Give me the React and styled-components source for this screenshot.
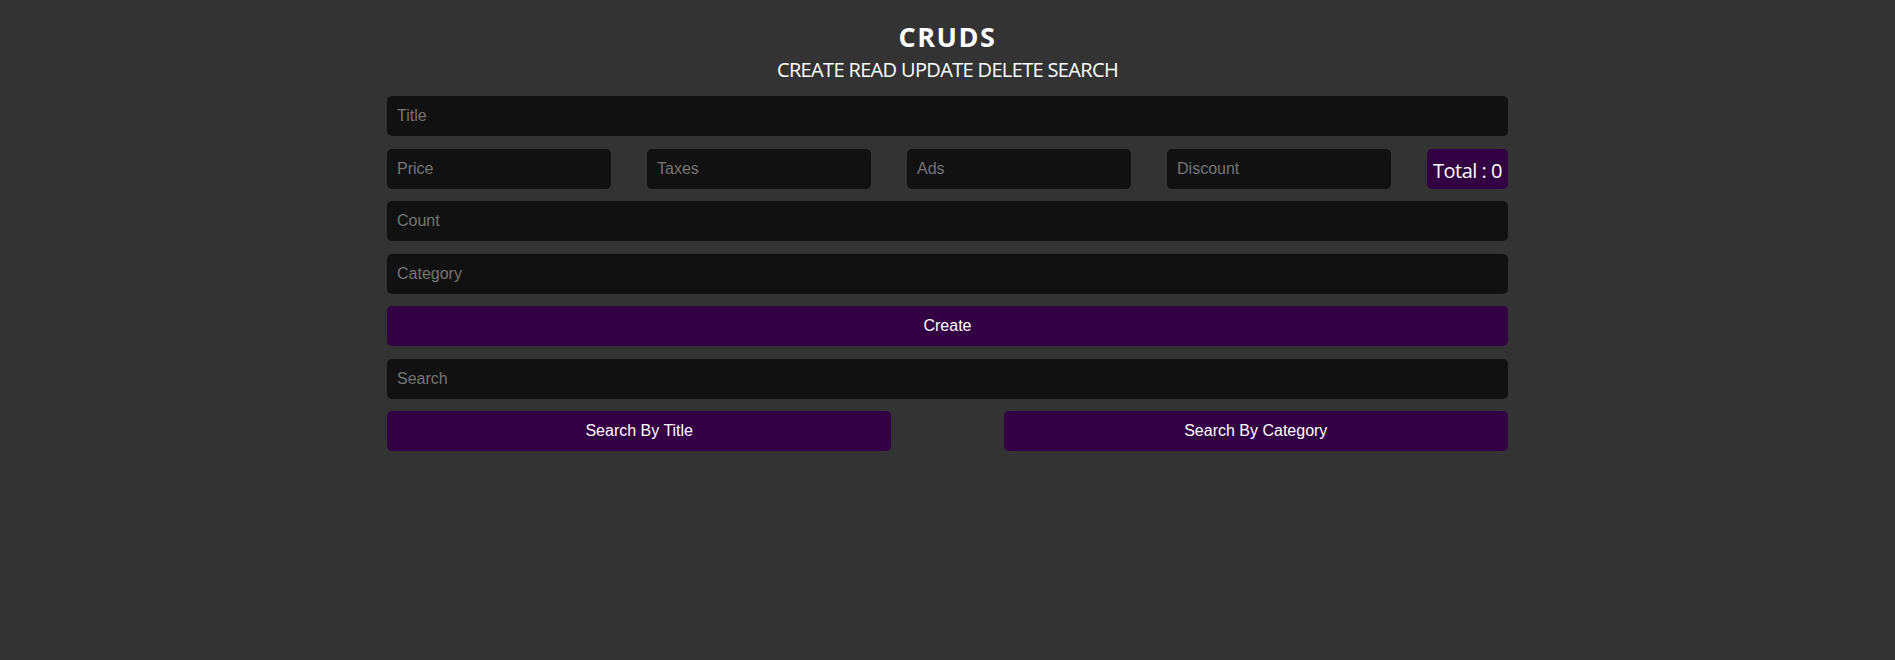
import React from "react";
import styled, { createGlobalStyle } from "styled-components";

const GlobalStyle = createGlobalStyle`
  * { box-sizing: border-box; }
  html, body {
    margin: 0;
    padding: 0;
    background: #333333;
    color: #fff;
    font-family: "Liberation Sans", Arial, sans-serif;
  }
`;

export default function App() {
  return (
    <>
      <GlobalStyle />
      <Crud>
        <Head>
          <h1>CRUDS</h1>
          <p>CREATE READ UPDATE DELETE SEARCH</p>
        </Head>
        <Inputs>
          <Field placeholder="Title" />
          <Price>
            <Field placeholder="Price" $small />
            <Field placeholder="Taxes" $small />
            <Field placeholder="Ads" $small />
            <Field placeholder="Discount" $small />
            <Total>Total : 0</Total>
          </Price>
          <Field placeholder="Count" />
          <Field placeholder="Category" />
          <Button>Create</Button>
          <Field placeholder="Search" />
          <SearchBtns>
            <Button $half>Search By Title</Button>
            <Button $half>Search By Category</Button>
          </SearchBtns>
        </Inputs>
      </Crud>
    </>
  );
}

const Crud = styled.div`
  width: 1121px;
  margin: 0 auto;
  padding-top: 19px;
`;

const Head = styled.div`
  text-align: center;
  margin-bottom: 13px;

  h1 {
    margin: 0;
    font-family: "Open Sans", sans-serif;
    font-size: 27px;
    font-weight: 700;
    line-height: 36px;
    letter-spacing: 1.5px;
  }

  p {
    margin: 1px 0 0;
    font-family: "Open Sans", sans-serif;
    font-size: 20px;
    line-height: 27px;
    letter-spacing: -0.65px;
  }
`;

const Inputs = styled.div`
  display: flex;
  flex-direction: column;
  gap: 12.5px;
`;

const Field = styled.input`
  width: ${(p) => (p.$small ? "20%" : "100%")};
  height: 40px;
  border: none;
  outline: none;
  border-radius: 5px;
  background: #111111;
  color: #fff;
  padding: 0 10px;
  font-family: "Liberation Sans", Arial, sans-serif;
  font-size: 16px;

  &::placeholder {
    color: #757575;
  }
`;

const Price = styled.div`
  display: flex;
  justify-content: space-between;
  align-items: center;
`;

const Total = styled.div`
  height: 40px;
  display: flex;
  align-items: center;
  padding: 3px 6px 0;
  border-radius: 5px;
  background: #330044;
  font-family: "Open Sans", sans-serif;
  font-size: 20px;
  letter-spacing: -0.5px;
`;

const Button = styled.button`
  width: ${(p) => (p.$half ? "45%" : "100%")};
  height: 40px;
  border: none;
  border-radius: 5px;
  background: #330044;
  color: #fff;
  cursor: pointer;
  font-family: "Liberation Sans", Arial, sans-serif;
  font-size: 16px;
`;

const SearchBtns = styled.div`
  display: flex;
  justify-content: space-between;
`;
